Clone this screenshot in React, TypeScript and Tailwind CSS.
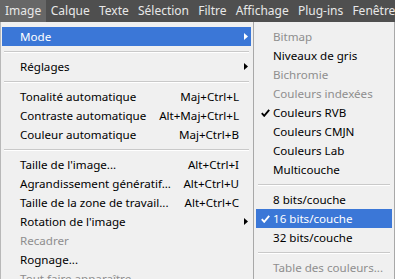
import React from "react";

type Item =
  | { sep: true }
  | { label: string; shortcut?: string; disabled?: boolean; arrow?: boolean; active?: boolean; check?: boolean };

const mainItems: Item[] = [
  { label: "Mode", arrow: true, active: true },
  { sep: true },
  { label: "Réglages", arrow: true },
  { sep: true },
  { label: "Tonalité automatique", shortcut: "Maj+Ctrl+L" },
  { label: "Contraste automatique", shortcut: "Alt+Maj+Ctrl+L" },
  { label: "Couleur automatique", shortcut: "Maj+Ctrl+B" },
  { sep: true },
  { label: "Taille de l'image...", shortcut: "Alt+Ctrl+I" },
  { label: "Agrandissement génératif...", shortcut: "Alt+Ctrl+U" },
  { label: "Taille de la zone de travail...", shortcut: "Alt+Ctrl+C" },
  { label: "Rotation de l'image", arrow: true },
  { label: "Recadrer", disabled: true },
  { label: "Rognage..." },
  { label: "Tout faire apparaître", disabled: true },
];

const subItems: Item[] = [
  { label: "Bitmap", disabled: true },
  { label: "Niveaux de gris" },
  { label: "Bichromie", disabled: true },
  { label: "Couleurs indexées", disabled: true },
  { label: "Couleurs RVB", check: true },
  { label: "Couleurs CMJN" },
  { label: "Couleurs Lab" },
  { label: "Multicouche" },
  { sep: true },
  { label: "8 bits/couche" },
  { label: "16 bits/couche", check: true, active: true },
  { label: "32 bits/couche" },
  { sep: true },
  { label: "Table des couleurs...", disabled: true },
];

const menuBar = ["Image", "Calque", "Texte", "Sélection", "Filtre", "Affichage", "Plug-ins", "Fenêtre"];

function Arrow({ white }: { white?: boolean }) {
  return (
    <svg width="4" height="7" viewBox="0 0 4 7" className="shrink-0">
      <path d="M0 0 L4 3.5 L0 7 Z" fill={white ? "#ffffff" : "#000000"} />
    </svg>
  );
}

function Check({ white }: { white?: boolean }) {
  return (
    <svg width="9" height="8" viewBox="0 0 9 8">
      <path d="M0.8 4.2 L3.2 6.8 L8.2 0.9" fill="none" stroke={white ? "#ffffff" : "#000000"} strokeWidth="1.9" />
    </svg>
  );
}

function Sep() {
  return (
    <div className="h-[11px] flex flex-col justify-center px-[2px]">
      <div className="h-px bg-[#c9c9c9]" />
      <div className="h-px bg-white" />
    </div>
  );
}

export default function App() {
  return (
    <div
      className="w-[395px] h-[279px] overflow-hidden bg-[#f0f0f0] text-[11.6px] leading-none"
      style={{ fontFamily: '"Segoe UI", "Noto Sans", "Open Sans", sans-serif' }}
    >
      <div className="h-[22px] bg-[#4f4f4f] flex items-stretch text-[#e8e8e8] text-[12px]">
        {menuBar.map((m, i) => (
          <div
            key={m}
            className={
              "flex items-center px-[4.6px] whitespace-nowrap " + (i === 0 ? "bg-[#676767] pl-[5px] pr-[5px]" : "")
            }
          >
            {m}
          </div>
        ))}
      </div>
      <div className="flex items-start">
        <div className="w-[253px] h-[257px] bg-[#f0f0f0] border-l border-[#b8b8b8] pt-[5px] pl-[1px] pr-[2px] shrink-0">
          {mainItems.map((it, i) =>
            "sep" in it ? (
              <Sep key={i} />
            ) : (
              <div
                key={i}
                className={
                  "h-[19px] flex items-center pl-[18px] pr-[2px] whitespace-nowrap " +
                  (it.active ? "bg-[#3b77d7] text-white" : it.disabled ? "text-[#8e8e8e]" : "text-black")
                }
              >
                <span className="flex-1">{it.label}</span>
                {it.shortcut && <span className="pr-[10px]">{it.shortcut}</span>}
                {it.arrow && <span className="pr-[1px]"><Arrow white={it.active} /></span>}
              </div>
            )
          )}
        </div>
        <div className="flex-1 h-[257px] bg-[#f0f0f0] border-l border-r border-[#a8a8a8] pt-[5px] px-[2px]">
          {subItems.map((it, i) =>
            "sep" in it ? (
              <Sep key={i} />
            ) : (
              <div
                key={i}
                className={
                  "h-[19px] flex items-center whitespace-nowrap " +
                  (it.active ? "bg-[#3b77d7] text-white" : it.disabled ? "text-[#8e8e8e]" : "text-black")
                }
              >
                <span className="w-[17px] flex justify-center pl-[1px]">
                  {it.check && <Check white={it.active} />}
                </span>
                <span>{it.label}</span>
              </div>
            )
          )}
        </div>
      </div>
    </div>
  );
}
